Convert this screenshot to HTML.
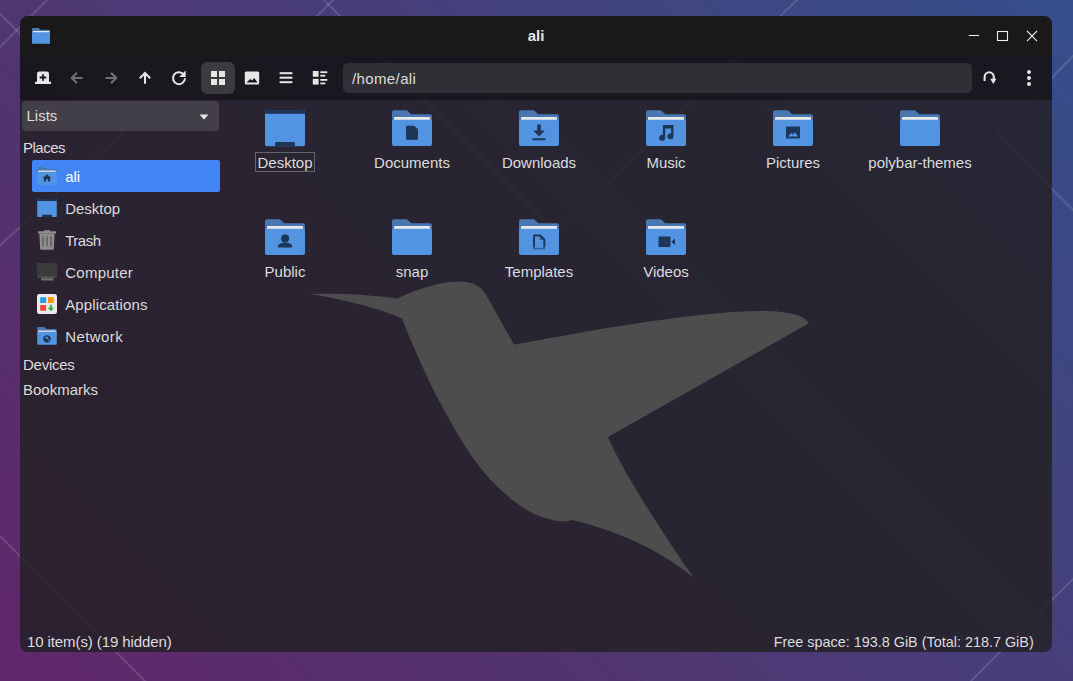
<!DOCTYPE html>
<html lang="en">
<head>
<meta charset="utf-8">
<title>ali</title>
<style>
*{box-sizing:border-box;margin:0;padding:0}
html,body{width:1073px;height:681px;overflow:hidden}
body{position:relative;font-family:"Liberation Sans","DejaVu Sans",sans-serif;color:#dcdcdc;font-size:15px;
 background:#4a3a78;}
#wall{position:absolute;left:0;top:0;width:1073px;height:681px;}
#win{position:absolute;left:20px;top:16px;width:1032px;height:636px;border-radius:8px;overflow:hidden;}
#title{position:absolute;left:0;top:0;width:1032px;height:40px;background:#191919;}
#title .name{position:absolute;left:0;width:1032px;top:0;height:40px;line-height:40px;text-align:center;font-weight:bold;font-size:15px;color:#e6e6e6;}
#tool{position:absolute;left:0;top:40px;width:1032px;height:44px;background:rgba(21,20,22,0.910);}
#main{position:absolute;left:0;top:84px;width:1032px;height:552px;background:rgba(36,33,38,0.860);}
#mi{position:absolute;left:0;top:-1px;width:1032px;height:553px;}
.abs{position:absolute}
.tb{position:absolute;top:6px;width:34px;height:32px;border-radius:6px;}
.tb.sel{background:#3a3a3f;}
.tb svg{position:absolute;left:0;top:0}
#path{position:absolute;left:323px;top:7px;width:629px;height:30px;border-radius:5px;background:#2f3036;padding-left:9px;line-height:32px;font-size:15px;letter-spacing:0.380px;color:#dedede;}
#combo{position:absolute;left:1.500px;top:2px;width:197.500px;height:30px;border-radius:4px;background:#423f48;padding-left:5px;line-height:30.500px;}
.sh{position:absolute;left:3px;height:20px;line-height:20px;}
.row{position:absolute;left:12px;width:188px;height:32px;border-radius:2px;line-height:34px;padding-left:33.200px;}
.row i{font-style:normal}
.row.sel{background:#4285f4;color:#fff;}
.row svg{position:absolute;left:5px;top:7px;}
.it{position:absolute;width:126px;height:80px;text-align:center;}
.it svg{position:absolute;left:43px;top:0;}
.it span{position:absolute;left:0;width:126px;top:42px;height:20px;line-height:20px;white-space:nowrap;}
.it span b{font-weight:normal;display:inline-block;padding:0 1px;border:1px solid transparent;height:20px;line-height:19px;}
.it.foc span b{border-color:#67646d;}
#st1{position:absolute;left:7px;top:533px;height:20px;line-height:20px;letter-spacing:-0.100px;}
#st2{position:absolute;right:18.300px;top:533.400px;height:20px;line-height:20px;font-size:14.400px;}
</style>
</head>
<body>
<svg id="wall" width="1073" height="681" viewBox="0 0 1073 681">
 <defs>
  <linearGradient id="wg" x1="0" y1="1" x2="1.190" y2="0.247">
   <stop offset="0" stop-color="#60266a"/>
   <stop offset="0.380" stop-color="#4f3672"/>
   <stop offset="0.600" stop-color="#463f7a"/>
   <stop offset="1" stop-color="#34508c"/>
  </linearGradient>
  <g id="wl" stroke="#ffffff" stroke-width="2.200" fill="none" stroke-linecap="round">
   <path d="M-2,12 L123,134 L-2,247"/>
   <path d="M-2,49 L49,-2"/>
   <path d="M321,-3 L556,233 L800,-3"/>
   <path d="M336,-3 L314,19"/>
   <path d="M1075,54 L997,134 L1075,212"/>
   <path d="M-2,534 L150,686"/>
   <path d="M1075,577 L967,685"/>
  </g>
 </defs>
 <rect width="1073" height="681" fill="url(#wg)"/>
 <use href="#wl" stroke-opacity="0.130"/>
</svg>

<svg width="0" height="0" style="position:absolute">
 <defs>
  <symbol id="fold" viewBox="0 0 40 37">
   <path fill="#4877b1" d="M0,2.2 a2,2 0 0 1 2,-2 h11.3 c1.6,0 2.2,0.5 3.2,1.5 l1.6,1.5 c0.8,0.8 1.4,1 2.6,1 h17.3 a2,2 0 0 1 2,2 v10 h-40 z"/>
   <rect x="2" y="7" width="36" height="4.600" rx="1" fill="#e9e9ea"/>
   <rect x="0" y="9.800" width="40" height="26.200" rx="2" fill="#5294e2"/>
  </symbol>
  <symbol id="desk" viewBox="0 0 40 37">
   <rect x="0" y="0" width="40" height="36.200" rx="2" fill="#5294e2"/>
   <path fill="#1d3557" d="M0,3.8 v-1.8 a2,2 0 0 1 2,-2 h36 a2,2 0 0 1 2,2 v1.8 z"/>
   <path fill="#1d3557" d="M10,36.200 v-2.600 a1.600,1.600 0 0 1 1.600,-1.600 h16.800 a1.600,1.600 0 0 1 1.600,1.600 v2.600 z"/>
  </symbol>
 </defs>
</svg>
<div id="win">
 <svg class="abs" style="left:-20px;top:-16px" width="1073" height="681" viewBox="0 0 1073 681"><rect width="1073" height="681" fill="url(#wg)"/><use href="#wl" stroke-opacity="0.170"/></svg>
 <div id="title">
  <div class="name">ali</div>
  <svg class="abs" style="left:12px;top:12px" width="18.400" height="16.200" viewBox="0 0 40 37" preserveAspectRatio="none"><use href="#fold"/></svg>
  <svg class="abs" style="left:940px;top:6px" width="86" height="28" viewBox="0 0 86 28" fill="none" stroke="#ececec" stroke-width="1.1">
   <path d="M8.800,13.500 h10.400"/>
   <rect x="37.500" y="9.500" width="10" height="9"/>
   <path d="M67,9 l10,10.200 M77,9 l-10,10.200"/>
  </svg>
 </div>
 <div id="tool">
  <div class="tb" style="left:6px"><svg width="34" height="32" viewBox="0 0 34 32">
    <path fill="#e6e6e6" d="M9,22 v-2.2 h2 v-8 a2.2,2.2 0 0 1 2.2,-2.2 h7.600 a2.2,2.2 0 0 1 2.2,2.2 v8 h2 v2.2 z"/>
    <path stroke="#1a191f" stroke-width="1.8" d="M17,12.200 v6.600 M13.700,15.500 h6.600" fill="none"/></svg></div>
  <div class="tb" style="left:40px"><svg width="34" height="32" viewBox="0 0 34 32" fill="none" stroke="#707073" stroke-width="2.100"><path d="M22.500,16 h-10.500 M17,10.800 l-5.200,5.200 l5.200,5.200"/></svg></div>
  <div class="tb" style="left:74px"><svg width="34" height="32" viewBox="0 0 34 32" fill="none" stroke="#707073" stroke-width="2.100"><path d="M11.500,16 h10.500 M17,10.800 l5.200,5.200 l-5.200,5.200"/></svg></div>
  <div class="tb" style="left:108px"><svg width="34" height="32" viewBox="0 0 34 32" fill="none" stroke="#e6e6e6" stroke-width="2.100"><path d="M17,21.700 v-10.500 M11.800,16.200 l5.200,-5.200 l5.200,5.200"/></svg></div>
  <div class="tb" style="left:142px"><svg width="34" height="32" viewBox="0 0 34 32" fill="none" stroke="#e6e6e6" stroke-width="2"><path d="M21.600,12.300 A6,6 0 1 0 23,16.300"/><path fill="#e6e6e6" stroke="none" d="M23.600,8.600 v6.400 h-6.400 z"/></svg></div>
  <div class="tb sel" style="left:181px"><svg width="34" height="32" viewBox="0 0 34 32" fill="#e6e6e6"><rect x="10" y="9" width="6" height="6"/><rect x="18" y="9" width="6" height="6"/><rect x="10" y="17" width="6" height="6"/><rect x="18" y="17" width="6" height="6"/></svg></div>
  <div class="tb" style="left:215px"><svg width="34" height="32" viewBox="0 0 34 32"><path fill="#e6e6e6" fill-rule="evenodd" d="M11.300,9.400 h11.400 a1.500,1.500 0 0 1 1.500,1.500 v10.200 a1.500,1.500 0 0 1 -1.500,1.500 h-11.400 a1.500,1.500 0 0 1 -1.500,-1.500 v-10.200 a1.500,1.500 0 0 1 1.500,-1.500 z M11.500,20.500 h11 l-3.300,-4.500 l-2.200,2.600 l-1.700,-1.700 z"/></svg></div>
  <div class="tb" style="left:249px"><svg width="34" height="32" viewBox="0 0 34 32" fill="#e6e6e6"><rect x="10.600" y="10.200" width="12.800" height="2"/><rect x="10.600" y="14.700" width="12.800" height="2"/><rect x="10.600" y="19.200" width="12.800" height="2"/></svg></div>
  <div class="tb" style="left:283px"><svg width="34" height="32" viewBox="0 0 34 32" fill="#e6e6e6"><rect x="9.800" y="9" width="5.800" height="5.800"/><rect x="9.800" y="16.800" width="5.800" height="5.800"/><rect x="17.300" y="9.300" width="7" height="1.800"/><rect x="17.300" y="12.800" width="5" height="1.800"/><rect x="17.300" y="17" width="7" height="1.800"/><rect x="17.300" y="20.500" width="5" height="1.800"/></svg></div>
  <svg class="abs" style="left:958px;top:8px" width="26" height="28" viewBox="0 0 26 28" fill="none" stroke="#e6e6e6" stroke-width="2.100"><path d="M6.600,17.100 V12.900 a4.600,4.600 0 0 1 9.200,0 V15.500"/><path fill="#e6e6e6" stroke="none" d="M12.200,14.800 h6.200 l-3.100,5.200 z"/></svg>
  <svg class="abs" style="left:1003px;top:10px" width="12" height="24" viewBox="0 0 12 24" fill="#e6e6e6"><circle cx="6" cy="5.900" r="2"/><circle cx="6" cy="11.900" r="2"/><circle cx="6" cy="18" r="2"/></svg>
  <div id="path">/home/ali</div>
 </div>
 <div id="main"><div id="mi">
  <svg class="abs" style="left:0;top:0" width="1032" height="553" viewBox="20 99 1032 553">
   <path fill="#4d4d4d" d="M310,294 C340,293 370,294.5 397,298.5 C410,293 435,281.5 460,281.5 C473,282 480,286 485,293 L514,344.7 C592,330 700,311 762,311 C790,311 806,316 808.5,323.5 L608,437 C620,465 650,515 694,578 C664,553.500 627,533.500 572,520 C570.4,520.4 566.3,521.6 562.5,521.4 C558.7,521.2 554.1,520.4 549.0,519.0 C543.9,517.6 537.7,515.7 532.1,512.9 C526.5,510.1 520.8,506.3 515.2,502.1 C509.6,497.9 503.9,493.1 498.3,487.6 C492.7,482.1 487.0,476.1 481.4,469.0 C475.8,461.9 470.1,454.0 464.5,445.3 C458.9,436.6 453.2,426.7 447.6,416.6 C442.0,406.5 436.3,396.1 430.7,384.5 C425.1,372.9 418.6,358.3 413.8,347.3 C409.0,336.3 404.0,323.3 402.0,318.5 C382,309.500 349,300.300 310,294 Z"/>
  </svg>
  <div id="combo">Lists</div>
  <svg class="abs" style="left:179px;top:14.600px" width="10" height="6" viewBox="0 0 10 6"><path fill="#e6e6e6" d="M0.500,0.500 h9 l-4.500,5 z"/></svg>
  <div class="sh" style="top:38.500px;letter-spacing:-0.500px">Places</div>
  <div class="row sel" style="top:61px"><svg width="20" height="18.300" viewBox="0 0 40 37"><use href="#fold"/><path fill="#1d3557" d="M20,14.500 l9,8 h-2.800 v6.800 h-4.200 v-4.300 h-4 v4.300 h-4.200 v-6.800 h-2.800 z"/></svg>ali</div>
  <div class="row" style="top:93px"><svg width="20" height="18.300" viewBox="0 0 40 37"><use href="#desk"/></svg>Desktop</div>
  <div class="row" style="top:125px"><svg style="left:6px;top:6px" width="18" height="20" viewBox="0 0 18 20"><path fill="#8d8d8d" d="M0,1.300 h6 v-1 h6 v1 h6 v2.200 h-18 z M1.400,3.800 h15.200 l-0.700,14.700 a1.400,1.400 0 0 1 -1.400,1.300 h-11 a1.400,1.400 0 0 1 -1.400,-1.300 z"/><path stroke="#666" stroke-width="1.800" d="M5,6.300 v10.200 M9,6.300 v10.200 M13,6.300 v10.200"/></svg><i style="letter-spacing:-0.500px">Trash</i></div>
  <div class="row" style="top:157px"><svg style="left:5px;top:7px" width="20" height="18" viewBox="0 0 20 18"><rect x="0" y="0" width="20" height="14.200" rx="1" fill="#3b3b3b"/><rect x="0" y="13" width="20" height="1.400" fill="#4a4a4a"/><rect x="4" y="14.400" width="12.500" height="3.200" rx="0.500" fill="#6e6e6e"/><rect x="4" y="14.400" width="12.500" height="1.200" fill="#555"/></svg><i style="letter-spacing:0.260px">Computer</i></div>
  <div class="row" style="top:189px"><svg style="left:5px;top:6px" width="20" height="20" viewBox="0 0 22 22"><rect x="0" y="0" width="22" height="22" rx="2.600" fill="#ebebeb"/><rect x="3.500" y="3.500" width="6.500" height="6.500" rx="0.600" fill="#1e9bf0"/><rect x="12" y="3.500" width="6.500" height="6.500" rx="0.600" fill="#ff9500"/><rect x="3.500" y="12" width="6.500" height="6.500" rx="0.600" fill="#f0443c"/><path fill="#3bb54a" d="M14,11.800 h2.600 v3.200 h2.400 l-3.700,4 l-3.700,-4 h2.400 z"/></svg><i style="letter-spacing:0.120px">Applications</i></div>
  <div class="row" style="top:221px"><svg width="20" height="18.300" viewBox="0 0 40 37"><use href="#fold"/><circle cx="20" cy="24" r="7.500" fill="#1d3557"/><path fill="#5294e2" d="M16,20 l4,-1 l3,2 l-2,3 l-3,0.500 z M22,26 l3,-1 l-1,4 z"/></svg><i style="letter-spacing:0.430px">Network</i></div>
  <div class="sh" style="top:256px;letter-spacing:-0.250px">Devices</div>
  <div class="sh" style="top:281px">Bookmarks</div>
  <div class="it foc" style="left:202px;top:11px"><svg width="40" height="37" viewBox="0 0 40 37"><use href="#desk"/></svg><span><b>Desktop</b></span></div>
  <div class="it" style="left:329px;top:11px"><svg width="40" height="37" viewBox="0 0 40 37"><use href="#fold"/><path fill="#1d3557" d="M14,15.700 h8.300 l3.700,3.700 v9.300 a1,1 0 0 1 -1,1 h-10 a1,1 0 0 1 -1,-1 v-12 a1,1 0 0 1 1,-1 z"/></svg><span><b>Documents</b></span></div>
  <div class="it" style="left:456px;top:11px"><svg width="40" height="37" viewBox="0 0 40 37"><use href="#fold"/><path fill="#1d3557" d="M18.200,14.500 h3.600 v6 h4 l-5.800,6 l-5.800,-6 h4 z M13.500,28.300 h13 v2 h-13 z"/></svg><span><b>Downloads</b></span></div>
  <div class="it" style="left:583px;top:11px"><svg width="40" height="37" viewBox="0 0 40 37"><use href="#fold"/><path fill="#1d3557" d="M17,15 h10.500 v11.300 a3,3 0 1 1 -2.300,-2.900 v-4.900 h-6 v9.300 a3,3 0 1 1 -2.300,-2.900 z"/></svg><span><b>Music</b></span></div>
  <div class="it" style="left:710px;top:11px"><svg width="40" height="37" viewBox="0 0 40 37"><use href="#fold"/><path fill="#1d3557" fill-rule="evenodd" d="M14,16.500 h12 a1,1 0 0 1 1,1 v10 a1,1 0 0 1 -1,1 h-12 a1,1 0 0 1 -1,-1 v-10 a1,1 0 0 1 1,-1 z M15,26.500 h10 l-3,-4.200 l-2,2.400 l-1.600,-1.600 z"/></svg><span><b>Pictures</b></span></div>
  <div class="it" style="left:837px;top:11px"><svg width="40" height="37" viewBox="0 0 40 37"><use href="#fold"/></svg><span><b>polybar-themes</b></span></div>
  <div class="it" style="left:202px;top:120px"><svg width="40" height="37" viewBox="0 0 40 37"><use href="#fold"/><path fill="#1d3557" d="M20.100,15.400 a4,4.100 0 0 1 0,8.200 a4,4.100 0 0 1 0,-8.200 z M13,28.500 v-1.200 c0,-2.300 3,-3.600 7.100,-3.600 c4.100,0 7.100,1.300 7.100,3.600 v1.200 z"/></svg><span><b>Public</b></span></div>
  <div class="it" style="left:329px;top:120px"><svg width="40" height="37" viewBox="0 0 40 37"><use href="#fold"/></svg><span><b>snap</b></span></div>
  <div class="it" style="left:456px;top:120px"><svg width="40" height="37" viewBox="0 0 40 37"><use href="#fold"/><path fill="none" stroke="#1d3557" stroke-width="1.900" stroke-linejoin="round" d="M15,28.500 v-12 h6.300 l4,4 v8"/><path fill="none" stroke="#1d3557" stroke-width="1.600" stroke-dasharray="1,1" d="M14.500,29.600 h11.500"/><path fill="#1d3557" d="M20.800,16 v5 h5 z" opacity="0.550"/></svg><span><b>Templates</b></span></div>
  <div class="it" style="left:583px;top:120px"><svg width="40" height="37" viewBox="0 0 40 37"><use href="#fold"/><path fill="#1d3557" d="M13.500,17.500 h10 a1,1 0 0 1 1,1 v8.500 a1,1 0 0 1 -1,1 h-10 a1,1 0 0 1 -1,-1 v-8.500 a1,1 0 0 1 1,-1 z M25.300,22.700 l3.700,-3.200 v6.400 z"/></svg><span><b>Videos</b></span></div>
  <div id="st1">10 item(s) (19 hidden)</div>
  <div id="st2">Free space: 193.8 GiB (Total: 218.7 GiB)</div>
 </div></div>
</div>
</body>
</html>
